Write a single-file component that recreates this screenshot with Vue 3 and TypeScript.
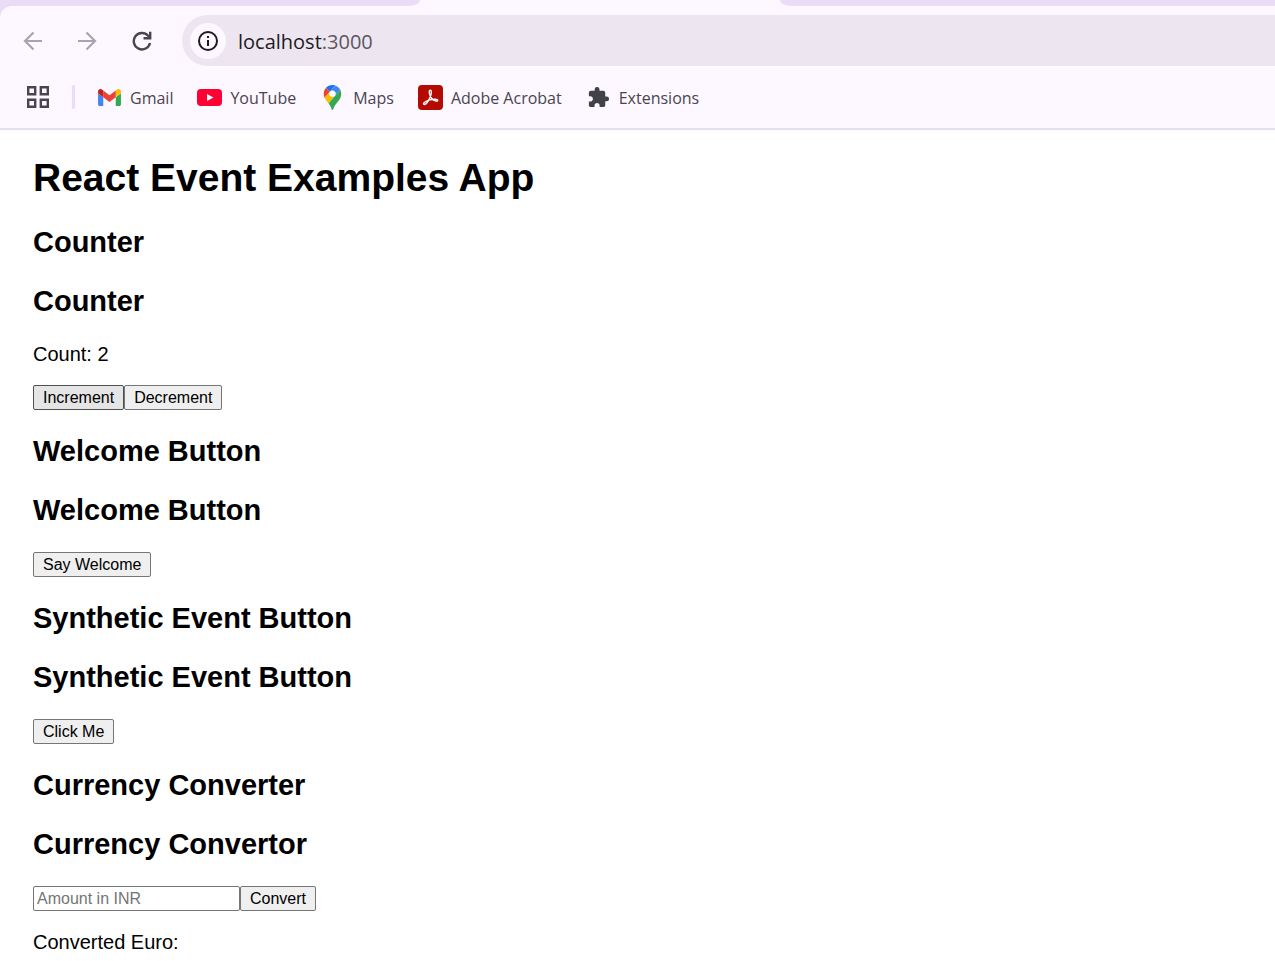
<script setup lang="ts">
import { ref } from 'vue'

const count = ref(2)
const amount = ref('')
const euro = ref('')

function convert(): void {
  const value = Number(amount.value)
  euro.value = amount.value && !Number.isNaN(value) ? (value / 90).toFixed(2) : ''
}
</script>

<template>
  <div class="browser">
    <header class="chrome">
      <div class="tabs">
        <div class="tabs-left"></div>
        <div class="tab-active"></div>
        <div class="tabs-right"></div>
      </div>
      <div class="toolbar">
        <nav class="controls" aria-label="Navigation">
          <button class="nav muted" aria-label="Back">
            <svg width="20" height="20" viewBox="0 0 20 20"><path d="M19 10H2M10.500 1.500L2 10l8.500 8.500" /></svg>
          </button>
          <button class="nav muted" aria-label="Forward">
            <svg width="20" height="20" viewBox="0 0 20 20"><path d="M1 10h17M9.500 1.500L18 10l-8.500 8.500" /></svg>
          </button>
          <button class="nav reload" aria-label="Reload">
            <svg width="20" height="20" viewBox="0 0 20 20"><path d="M18 12a8.200 8.200 0 1 1-1.900-7.300L18 6.700M18.200 0.800v6.400h-6.700" /></svg>
          </button>
          <div class="address">
            <button class="info" aria-label="Site information">
              <svg width="22" height="22" viewBox="0 0 22 22">
                <circle cx="11" cy="11" r="9" fill="none" stroke="#1d1b20" stroke-width="2" />
                <path d="M10 10h2v6h-2zM10 6h2v2h-2z" fill="#1d1b20" />
              </svg>
            </button>
            <div class="url" role="textbox" contenteditable="true" aria-label="Address">localhost<span class="port">:3000</span></div>
          </div>
        </nav>
        <nav class="bookmarks" aria-label="Bookmarks">
          <button class="apps" aria-label="Apps">
            <svg width="22" height="22" viewBox="0 0 22 22" fill="none" stroke="#49454e" stroke-width="2.400">
              <path d="M1.200 1.200h7v7h-7zM13.800 1.200h7v7h-7zM1.200 13.800h7v7h-7zM13.800 13.800h7v7h-7z" />
            </svg>
          </button>
          <span class="divider"></span>
          <a class="bookmark" href="#gmail">
            <svg class="icon" width="25" height="25" viewBox="48 27 96 96">
              <path fill="#4285f4" d="M58 108h14V74L52 59v43c0 3.320 2.690 6 6 6" />
              <path fill="#34a853" d="M120 108h14c3.320 0 6-2.690 6-6V59l-20 15" />
              <path fill="#fbbc04" d="M120 48v26l20-15v-8c0-7.420-8.470-11.650-14.400-7.200" />
              <path fill="#ea4335" d="M72 74V48l24 18 24-18v26L96 92" />
              <path fill="#c5221f" d="M52 51v8l20 15V48l-5.600-4.200c-5.940-4.450-14.400-.22-14.400 7.200" />
            </svg>
            <span class="label">Gmail</span>
          </a>
          <a class="bookmark" href="#youtube">
            <svg class="icon" width="25" height="25" viewBox="0 0 25 25">
              <rect y="4" width="25" height="17" rx="4" fill="#ff0033" />
              <path d="M10 9l6.500 3.500L10 16z" fill="#fff" />
            </svg>
            <span class="label">YouTube</span>
          </a>
          <a class="bookmark" href="#maps">
            <svg class="icon" width="25" height="25" viewBox="-20 0 132.400 132.400">
              <circle cx="46" cy="46" r="20" fill="#fff" />
              <path fill="#1a73e8" d="M60.200 2.200C55.800.8 51 0 46.100 0 32 0 19.300 6.400 10.800 16.500l21.800 18.300L60.200 2.200z" />
              <path fill="#ea4335" d="M10.800 16.500C4.100 24.500 0 34.900 0 46.100c0 8.700 1.700 15.700 4.600 22l28-33.300-21.800-18.300z" />
              <path fill="#4285f4" d="M46.200 28.500c9.800 0 17.700 7.900 17.700 17.700 0 4.300-1.600 8.300-4.200 11.400 0 0 13.900-16.600 27.500-32.700-5.600-10.800-15.300-19-27-22.700L32.600 34.800c3.300-3.800 8.100-6.300 13.600-6.300" />
              <path fill="#fbbc04" d="M46.200 63.800c-9.800 0-17.700-7.900-17.700-17.700 0-4.300 1.500-8.300 4.100-11.300l-28 33.300c4.800 10.600 12.800 19.200 21 29.900l34.100-40.500c-3.300 3.900-8.100 6.300-13.500 6.300" />
              <path fill="#34a853" d="M59.100 109.200c15.400-24.100 33.300-35 33.300-63 0-7.700-1.900-14.900-5.200-21.300L25.600 98c2.600 3.400 5.300 7.300 7.900 11.300 9.400 14.500 6.800 23.100 12.800 23.100s3.400-8.700 12.800-23.200" />
            </svg>
            <span class="label">Maps</span>
          </a>
          <a class="bookmark" href="#acrobat">
            <svg class="icon" width="25" height="25" viewBox="0 0 25 25">
              <rect width="25" height="25" rx="4" fill="#b30b00" />
              <path d="M12.200 5.300c1.900 0 1.300 3.900-.3 7.300-1.700 3.800-4.300 7.200-5.800 6.800-1.700-.6.500-3.200 5.600-4.500 3.900-1 8-.9 8 .5 0 1.500-3.700.6-5.900-1.900-2.100-2.400-3.600-8.200-1.600-8.200z" fill="none" stroke="#fff" stroke-width="1.400" />
            </svg>
            <span class="label">Adobe Acrobat</span>
          </a>
          <a class="bookmark" href="#extensions">
            <svg class="icon" width="25" height="25" viewBox="0 0 26 26">
              <path fill="#3f4246" d="M21.500 12H20V8c0-1.100-.9-2-2-2h-4V4.500a2.500 2.500 0 0 0-5 0V6H5c-1.100 0-2 .9-2 2v3.800h1.500c1.490 0 2.700 1.210 2.700 2.700s-1.210 2.700-2.700 2.700H3V21c0 1.100.9 2 2 2h3.800v-1.500c0-1.490 1.210-2.700 2.700-2.700s2.700 1.210 2.700 2.700V23H18c1.100 0 2-.9 2-2v-4h1.500a2.500 2.500 0 0 0 0-5z" />
            </svg>
            <span class="label">Extensions</span>
          </a>
        </nav>
      </div>
    </header>

    <main class="page">
      <h1>React Event Examples App</h1>

      <h2>Counter</h2>
      <h2>Counter</h2>
      <p>Count: {{ count }}</p>
      <div class="row">
        <button class="btn active" @click="count++">Increment</button>
        <button class="btn" @click="count--">Decrement</button>
      </div>

      <h2>Welcome Button</h2>
      <h2>Welcome Button</h2>
      <div class="row"><button class="btn">Say Welcome</button></div>

      <h2>Synthetic Event Button</h2>
      <h2>Synthetic Event Button</h2>
      <div class="row"><button class="btn">Click Me</button></div>

      <h2>Currency Converter</h2>
      <h2>Currency Convertor</h2>
      <div class="row">
        <input v-model="amount" class="amount" type="text" placeholder="Amount in INR" aria-label="Amount in INR" />
        <button class="btn" @click="convert">Convert</button>
      </div>
      <p class="result">Converted Euro: {{ euro }}</p>
    </main>
  </div>
</template>

<style>
body {
  margin: 0;
  background: #fff;
}
</style>

<style scoped>
.browser {
  min-height: 100vh;
  box-sizing: border-box;
  overflow: hidden;
}
.chrome {
  background: #eadcf6;
  font-family: "Open Sans", "Noto Sans", sans-serif;
}
.tabs {
  display: flex;
  height: 6px;
  background: #fdf7ff;
}
.tabs-left,
.tabs-right {
  background: #eadcf6;
}
.tabs-left {
  flex: 0 0 420px;
  border-bottom-right-radius: 12px 6px;
}
.tab-active {
  flex: 0 0 360px;
}
.tabs-right {
  flex: 1;
  border-bottom-left-radius: 12px 6px;
}
.toolbar {
  padding-top: 9px;
  background: #fdf7ff;
  border-top-left-radius: 12px;
  border-bottom: 2px solid #e6dfeb;
}
.controls {
  display: flex;
  align-items: center;
  gap: 24px;
  padding-left: 18px;
}
.nav,
.info,
.apps {
  display: flex;
  align-items: center;
  justify-content: center;
  flex: none;
  padding: 0;
  border: 0;
  background: none;
}
.nav {
  width: 30px;
  height: 30px;
}
.nav svg {
  fill: none;
  stroke: #49454e;
  stroke-width: 2.4;
}
.nav.muted svg {
  stroke: #a9a3ad;
  stroke-width: 2.2;
}
.reload {
  width: 32px;
}
.address {
  display: flex;
  align-items: center;
  flex: 1;
  gap: 12px;
  height: 51px;
  padding-left: 8px;
  background: #ede6f1;
  border-radius: 26px 0 0 26px;
}
.info {
  width: 36px;
  height: 36px;
  border-radius: 50%;
  background: #fdf7ff;
}
.url {
  flex: 1;
  padding-top: 2px;
  font-size: 20px;
  line-height: 28px;
  color: #1d1b20;
  outline: none;
}
.port {
  color: #5b5660;
}
.bookmarks {
  display: flex;
  align-items: center;
  gap: 24px;
  height: 62px;
  padding-left: 27px;
}
.apps {
  width: 22px;
  height: 22px;
}
.divider {
  width: 3px;
  height: 24px;
  margin: 0 -2px 0 -1px;
  border-radius: 2px;
  background: #eadcfb;
}
.bookmark {
  display: flex;
  align-items: center;
  gap: 8px;
  font-size: 16px;
  line-height: 24px;
  white-space: nowrap;
  color: #49454e;
  text-decoration: none;
}
.label {
  padding-top: 2px;
}
.icon {
  flex: none;
}
.page {
  padding: 25px 33px 0;
  font-family: "Liberation Sans", Arial, sans-serif;
  color: #000;
}
h1 {
  margin: 0 0 24px;
  font-size: 39px;
  line-height: 46px;
}
h2 {
  margin: 0 0 24px;
  font-size: 29px;
  line-height: 35px;
}
p {
  margin: 0 0 20px;
  font-size: 20px;
  line-height: 22px;
}
.row {
  display: flex;
  margin-bottom: 24px;
}
.btn {
  height: 25px;
  padding: 0 9px;
  border: 1px solid #767676;
  border-radius: 2px;
  background: #efefef;
  font-family: inherit;
  font-size: 16px;
  line-height: 22px;
  color: #000;
}
.active {
  border-color: #4f4f4f;
  background: #e5e5e5;
}
.amount {
  width: 207px;
  height: 25px;
  box-sizing: border-box;
  padding: 0 3px;
  border: 1px solid #767676;
  border-radius: 2px;
  font-family: inherit;
  font-size: 16px;
}
.amount::placeholder {
  color: #757575;
}
.row:last-of-type {
  margin-bottom: 20px;
}
.result {
  margin-bottom: 0;
}
</style>
